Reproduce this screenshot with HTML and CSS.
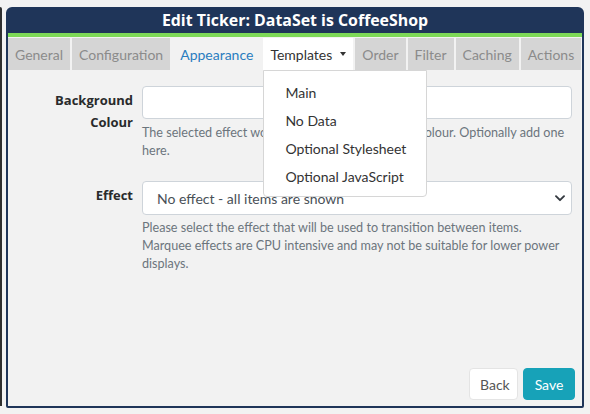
FILE: index.html
```html
<!DOCTYPE html>
<html lang="en">
<head>
<meta charset="utf-8">
<title>Edit Ticker</title>
<link rel="stylesheet" href="styles.css">
</head>
<body>
<div class="page">
  <div class="edge"></div>
  <div class="modal">
    <div class="modal-header">
      <h1 class="title">Edit Ticker: DataSet is CoffeeShop</h1>
    </div>
    <ul class="tabs">
      <li class="tab">General</li>
      <li class="tab">Configuration</li>
      <li class="tab tab-active">Appearance</li>
      <li class="tab tab-open">Templates<span class="caret"></span>
        <div class="menu">
          <div class="menu-item">Main</div>
          <div class="menu-item">No Data</div>
          <div class="menu-item">Optional Stylesheet</div>
          <div class="menu-item">Optional JavaScript</div>
        </div>
      </li>
      <li class="tab">Order</li>
      <li class="tab">Filter</li>
      <li class="tab">Caching</li>
      <li class="tab">Actions</li>
    </ul>
    <div class="modal-body">
      <div class="form-grid">
        <label class="form-label">Background Colour</label>
        <div class="field">
          <div class="input"></div>
          <p class="help">The selected effect works best with a background colour. Optionally add one here.</p>
        </div>
        <label class="form-label form-label-effect">Effect</label>
        <div class="field">
          <div class="select">
            <span>No effect - all items are shown</span>
            <svg class="chevron" width="10" height="7" viewBox="0 0 10 7"><path d="M1 1.2l4 4 4-4" fill="none" stroke="#343a40" stroke-width="1.9" stroke-linecap="round" stroke-linejoin="round"/></svg>
          </div>
          <p class="help">Please select the effect that will be used to transition between items. Marquee effects are CPU intensive and may not be suitable for lower power displays.</p>
        </div>
      </div>
    </div>
    <div class="modal-footer">
      <button class="btn btn-back">Back</button>
      <button class="btn btn-save">Save</button>
    </div>
  </div>
</div>
</body>
</html>
```
FILE: styles.css
```css
* { box-sizing: border-box; }
html, body { margin: 0; padding: 0; }
body {
  background: #f2f2f2;
  font-family: Lato, "Open Sans", sans-serif;
  font-size: 14px;
  color: #292b2c;
}
.page {
  display: flex;
  align-items: flex-start;
  padding-top: 7px;
  height: 414px;
}
.edge {
  width: 2px;
  height: 399px;
  margin-right: 4px;
  background: #2f2f2f;
  border-radius: 0 2px 0 0;
}
.modal {
  width: 578px;
  height: 401px;
  display: flex;
  flex-direction: column;
  background: #f2f2f2;
  border: 2px solid #1f3559;
  border-radius: 6px 6px 2px 2px;
}
.modal-header {
  background: #1f3559;
  height: 28px;
  border-bottom: 4px solid #7dd957;
  padding-bottom: 2px;
  display: flex;
  align-items: center;
  justify-content: center;
}
.title {
  margin: 0;
  font-family: "Open Sans", sans-serif;
  font-weight: 700;
  font-size: 15.9px;
  line-height: 20px;
  color: #ffffff;
}
.tabs {
  list-style: none;
  margin: 0;
  padding: 1px 0 0;
  display: flex;
  gap: 2px;
}
.tab {
  height: 32px;
  padding: 0 7px;
  display: flex;
  align-items: center;
  background: #d5d5d5;
  color: #8b8b8b;
  font-size: 14px;
  white-space: nowrap;
}
.tab-active {
  background: #f2f2f2;
  color: #2a7dc0;
  padding: 0 8px;
}
.tab-open {
  position: relative;
  background: #ffffff;
  color: #333333;
}
.caret {
  display: inline-block;
  margin-left: 8px;
  width: 0;
  height: 0;
  border-top: 4px solid #333333;
  border-left: 3.5px solid transparent;
  border-right: 3.5px solid transparent;
}
.menu {
  position: absolute;
  top: 100%;
  left: 0;
  z-index: 10;
  width: 164px;
  padding: 8px 0 5px;
  background: #ffffff;
  border: 1px solid #d6d6d6;
  border-radius: 0 0 4px 4px;
}
.menu-item {
  padding: 4px 21px;
  line-height: 20px;
  color: #333333;
  font-size: 14px;
}
.modal-body {
  flex: 1;
  padding: 16px 10px 0 0;
}
.form-grid {
  display: grid;
  grid-template-columns: 125px 1fr;
  column-gap: 9px;
  row-gap: 21px;
}
.form-label {
  padding: 3px 0 0 16px;
  text-align: right;
  font-family: "Open Sans", sans-serif;
  font-weight: 700;
  font-size: 13px;
  line-height: 22px;
  color: #292b2c;
}
.input {
  height: 33px;
  background: #ffffff;
  border: 1px solid #ced4da;
  border-radius: 4px;
}
.select {
  height: 34px;
  padding: 0 6px 0 14px;
  display: flex;
  align-items: center;
  justify-content: space-between;
  background: #ffffff;
  border: 1px solid #ced4da;
  border-radius: 4px;
  color: #495057;
  font-size: 14px;
}
.chevron { display: block; }
.help {
  margin: 5px 0 0;
  font-size: 12.6px;
  line-height: 18px;
  color: #6c757d;
}
.select + .help { margin-top: 4px; }
.modal-footer {
  display: flex;
  justify-content: flex-end;
  gap: 5px;
  padding: 0 7px 6px 0;
}
.btn {
  height: 32px;
  padding: 0 10px;
  font-family: Lato, "Open Sans", sans-serif;
  font-size: 14px;
  border-radius: 4px;
  cursor: pointer;
}
.btn-back {
  width: 49px;
  background: #ffffff;
  border: 1px solid #e4e4e4;
  color: #555555;
}
.btn-save {
  width: 52px;
  background: #17a2b8;
  border: 1px solid #17a2b8;
  color: #ffffff;
}
```
